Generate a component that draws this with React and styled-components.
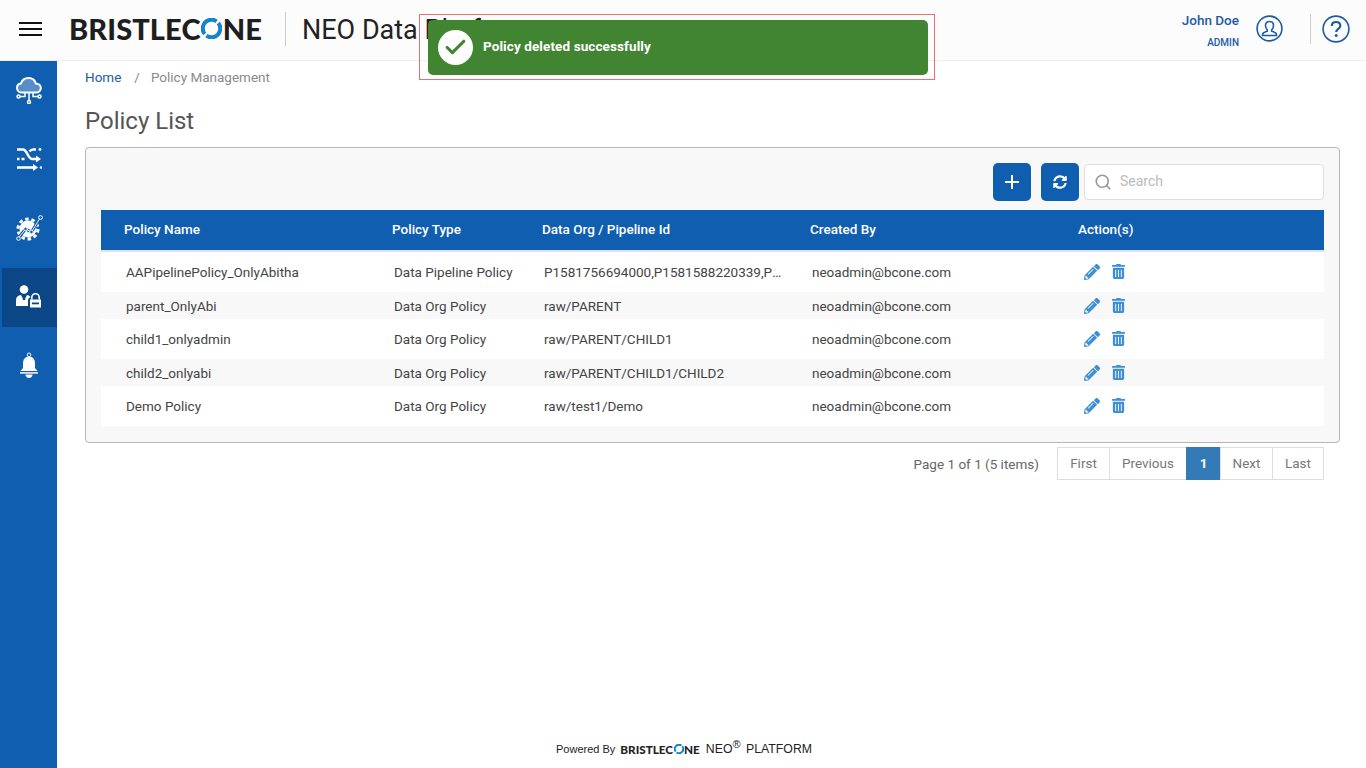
import React from "react";
import styled, { createGlobalStyle } from "styled-components";
import { FaTrashAlt, FaSyncAlt, FaPencilAlt } from "react-icons/fa";
import { Check, Search } from "lucide-react";

const GlobalStyle = createGlobalStyle`
  html, body { margin: 0; padding: 0; height: 100%; background: #fff; }
  body { font-family: Roboto, "Liberation Sans", sans-serif; font-size: 13.5px; color: #444; }
  #root { height: 100%; }
`;

const Page = styled.div`
  width: 1366px;
  height: 768px;
  overflow: hidden;
  position: relative;
  display: flex;
  flex-direction: column;
`;

const Header = styled.header`
  height: 60px;
  flex: none;
  background: #fcfcfc;
  border-bottom: 1px solid #eee;
  display: flex;
  align-items: center;
`;

const Burger = styled.div`
  width: 23px;
  margin-left: 19px;
  display: flex;
  flex-direction: column;
  gap: 4px;
  margin-top: -2px;
  span { height: 2px; background: #111; display: block; }
`;

const LogoText = styled.div`
  margin-left: 27px;
  margin-top: -3px;
  font-family: Lato, sans-serif;
  font-weight: 900;
  font-size: 29px;
  letter-spacing: 0.1px;
  color: #1e1e1e;
  display: flex;
  align-items: center;
  width: 193px;
  line-height: 1;
`;

const AppTitle = styled.div`
  margin-left: 23px;
  padding-left: 16px;
  height: 34px;
  margin-top: -3px;
  border-left: 1px solid #ccc;
  font-size: 27px;
  line-height: 36px;
  color: #222;
  white-space: nowrap;
`;

const HeaderRight = styled.div`
  margin-left: auto;
  display: flex;
  align-items: center;
  padding-right: 16px;
  margin-top: -3px;
`;

const UserBox = styled.div`
  text-align: right;
  color: #1d5ba6;
  margin-right: 17px;
  padding-top: 2px;
`;

const UserName = styled.div`
  font-size: 13.5px;
  font-weight: 500;
  line-height: 18px;
`;

const UserRole = styled.div`
  font-size: 10px;
  font-weight: 500;
  line-height: 12px;
  margin-top: 8px;
`;

const HeaderDivider = styled.div`
  width: 1px;
  height: 30px;
  background: #ccc;
  margin: 0 11px 0 27px;
`;

const Body = styled.div`
  flex: 1;
  display: flex;
  min-height: 0;
`;

const Sidebar = styled.nav`
  width: 57px;
  flex: none;
  background: #105eb0;
  display: flex;
  flex-direction: column;
`;

const SideItem = styled.div`
  height: 59px;
  margin-left: 2px;
  margin-top: 10px;
  background: ${(p) => (p.$active ? "#0b4787" : "transparent")};
  display: flex;
  align-items: center;
  justify-content: center;
  padding-right: 1px;
  padding-bottom: 1px;
  box-sizing: border-box;
  &:first-child { margin-top: 0; }
`;

const Main = styled.main`
  flex: 1;
  padding: 0 26px 0 28px;
  display: flex;
  flex-direction: column;
  min-width: 0;
`;

const Breadcrumb = styled.div`
  height: 32px;
  display: flex;
  align-items: center;
  color: #8a8a8a;
  a { color: #1d5ba6; text-decoration: none; }
  i { font-style: normal; margin: 0 11px 0 13px; }
`;

const Title = styled.h1`
  margin: 12px 0 9px;
  font-size: 24px;
  font-weight: 400;
  line-height: 33px;
  color: #555;
`;

const Panel = styled.section`
  border: 1px solid #b5b5b5;
  border-radius: 4px;
  background: #f8f8f8;
  padding: 15px 15px 16px;
`;

const Toolbar = styled.div`
  display: flex;
  justify-content: flex-end;
  align-items: center;
  height: 38px;
  margin-bottom: 9px;
`;

const IconButton = styled.button`
  width: 38px;
  height: 38px;
  border: none;
  border-radius: 5px;
  background: #105eb0;
  color: #fff;
  padding: 0;
  margin-right: ${(p) => p.$mr}px;
  display: flex;
  align-items: center;
  justify-content: center;
`;

const SearchBox = styled.div`
  width: 240px;
  height: 36px;
  box-sizing: border-box;
  background: #fff;
  border: 1px solid #ddd;
  border-radius: 4px;
  display: flex;
  align-items: center;
  padding-left: 9px;
  color: #999;
  gap: 8px;
`;

const SearchInput = styled.input`
  border: none;
  outline: none;
  background: transparent;
  font: 14px Roboto, sans-serif;
  width: 180px;
  padding: 0 0 2px;
  &::placeholder { color: #bbb; }
`;

const Table = styled.div`
  display: flex;
  flex-direction: column;
`;

const columns = "268px 150px 268px 268px 1fr";

const HeadRow = styled.div`
  display: grid;
  grid-template-columns: ${columns};
  height: 42px;
  box-sizing: border-box;
  background: #105eb0;
  color: #fff;
  font-weight: 500;
  align-items: center;
  padding: 0 0 2px 23px;
  border-bottom: 2px solid #e2e2e2;
`;

const Row = styled.div`
  display: grid;
  grid-template-columns: ${columns};
  height: ${(p) => p.$h}px;
  box-sizing: border-box;
  background: ${(p) => (p.$shade ? "#f8f8f8" : "#fff")};
  align-items: center;
  padding: 0 0 ${(p) => (p.$shade ? 0 : 1)}px 25px;
  color: #444;
`;

const Cell = styled.div`
  white-space: nowrap;
  overflow: hidden;
  text-overflow: ellipsis;
  padding-right: 30px;
`;

const Actions = styled.div`
  display: flex;
  align-items: center;
  gap: 11px;
  padding-left: 6px;
  margin-left: -2px;
  color: #3b8fd6;
`;

const Pager = styled.div`
  display: flex;
  justify-content: flex-end;
  align-items: center;
  margin-top: 4px;
  margin-right: 16px;
`;

const PagerInfo = styled.span`
  color: #666;
  margin-right: 19px;
`;

const PagerList = styled.div`
  display: flex;
  height: 33px;
`;

const PageLink = styled.div`
  box-sizing: border-box;
  display: flex;
  align-items: center;
  justify-content: center;
  width: ${(p) => p.$w}px;
  border: 1px solid #ddd;
  margin-left: -1px;
  padding-bottom: 2px;
  font-weight: ${(p) => (p.$active ? 700 : 400)};
  background: ${(p) => (p.$active ? "#337ab7" : "#fff")};
  border-color: ${(p) => (p.$active ? "#337ab7" : "#ddd")};
  color: ${(p) => (p.$active ? "#fff" : "#777")};
`;

const Footer = styled.footer`
  margin-top: auto;
  height: 30px;
  display: flex;
  align-items: flex-start;
  padding-left: 471px;
  font-family: "Liberation Sans", sans-serif;
  color: #222;
  white-space: nowrap;
`;

const Powered = styled.span`
  font-size: 11px;
  line-height: 14px;
  margin-top: 4px;
`;

const FooterLogo = styled.span`
  font-family: Lato, sans-serif;
  font-weight: 900;
  font-size: 11.7px;
  line-height: 14px;
  margin: 4px 6px 0 5px;
  color: #222;
  display: inline-flex;
  align-items: center;
`;

const Platform = styled.span`
  font-size: 12.3px;
  line-height: 14px;
  margin-top: 4px;
  word-spacing: 2px;
  sup { font-size: 11px; line-height: 0; }
`;

const Toast = styled.div`
  position: absolute;
  left: 419px;
  top: 14px;
  width: 516px;
  height: 66px;
  box-sizing: border-box;
  border: 1px solid #ee6f6f;
  padding: 5px 6px 4px 8px;
`;

const ToastBody = styled.div`
  height: 100%;
  background: #418532;
  border-radius: 5px;
  display: flex;
  align-items: center;
  padding-left: 10px;
  gap: 10px;
  color: #fff;
  font-weight: 700;
`;

const ToastLabel = styled.span`
  margin-top: -3px;
  letter-spacing: 0.1px;
`;

const ToastIcon = styled.div`
  width: 35px;
  height: 35px;
  border-radius: 50%;
  background: #fff;
  color: #418532;
  display: flex;
  align-items: center;
  justify-content: center;
`;

const LogoO = ({ size }) => (
  <svg width={size} height={size} viewBox="0 0 24 24" style={{ margin: "0 0.5px" }}>
    <g fill="none" stroke="#1683cc" strokeWidth="4.6">
      <path d="M17.800 3.800A10 10 0 0 0 4.200 18.200" />
      <path d="M6.200 20.200A10 10 0 0 0 19.800 5.800" />
    </g>
  </svg>
);

const CloudIcon = () => (
  <svg width="28" height="28" viewBox="0 0 28 28" fill="none" stroke="#fff" strokeWidth="1.500">
    <path d="M7 16.500c-3 0-5-2-5-4.600 0-2.400 1.800-4.200 4-4.400C7 4 10 2 13.500 2c3.700 0 6.500 2.300 7.300 5.500 2.800 0 5 2 5 4.500 0 2.600-2 4.500-5 4.500z" fill="#dfe9f5" fillOpacity="0.35" strokeWidth="2" />
    <path d="M10 17v3.500H5M14 17v8M18 17v3.500h5" />
    <circle cx="3.500" cy="20.500" r="1.500" />
    <circle cx="14" cy="26" r="1.500" />
    <circle cx="24.500" cy="20.500" r="1.500" />
  </svg>
);

const ShuffleIcon = () => (
  <svg width="25" height="23" viewBox="0 0 25 23" fill="none" stroke="#fff" strokeWidth="2.600">
    <path d="M0 1.500h6c4 0 5 9.500 9 9.500h5" />
    <path d="M19 7.500l5 3.500-5 3.500z" fill="#fff" stroke="none" />
    <path d="M12.500 3.500c1-1.300 2-2 3.500-2h3" />
    <path d="M0 19.500h17" />
    <path d="M16 16l5 3.500-5 3.500z" fill="#fff" stroke="none" />
    <path d="M0 11h2.500M4.500 11h3" />
    <circle cx="23" cy="1.500" r="1.400" fill="#fff" stroke="none" />
    <circle cx="24" cy="19.500" r="1.300" fill="#fff" stroke="none" />
  </svg>
);

const GearIcon = () => (
  <svg width="27" height="28" viewBox="0 0 27 28">
    <circle cx="12" cy="15" r="8.500" fill="#fff" />
    <circle cx="12" cy="15" r="10" fill="none" stroke="#fff" strokeWidth="3" strokeDasharray="3.500 2.780" />
    <path d="M2.500 24l7-9 6 3L24 4" fill="none" stroke="#105eb0" strokeWidth="3" />
    <path d="M2.500 24l7-9 6 3L24 4" fill="none" stroke="#fff" strokeWidth="0.900" />
    <circle cx="2.500" cy="24.500" r="1.800" fill="#105eb0" stroke="#fff" />
    <circle cx="9.500" cy="15" r="1.800" fill="#105eb0" stroke="#fff" />
    <circle cx="15.500" cy="18" r="1.800" fill="#105eb0" stroke="#fff" />
    <circle cx="24.500" cy="3.500" r="1.900" fill="#105eb0" stroke="#fff" />
  </svg>
);

const UserLockIcon = () => (
  <svg width="28" height="26" viewBox="0 0 28 26" fill="#fff">
    <circle cx="9" cy="5.500" r="4.300" />
    <path d="M1 22v-6c0-3 2-4.500 5-5l2 4-.5 1h3l-.5-1 2-4c1.500.3 2.800 1 3.500 2-1.500.8-2.500 2.200-2.500 4v5z" />
    <path d="M16 15.500v-2a4.500 4.500 0 0 1 9 0v2h-1.600v-2a2.900 2.900 0 0 0-5.800 0v2z" />
    <path d="M15 15.500h11V23.500H15z" />
    <path d="M17 18.500h7v1.800h-7z" fill="#0b4787" />
  </svg>
);

const BellIcon = () => (
  <svg width="20" height="28" viewBox="0 0 20 28" fill="#fff">
    <circle cx="10" cy="2.800" r="1.800" fill="none" stroke="#fff" strokeWidth="1" />
    <path d="M10 4.500c-4 0-6 3-6 7v4.500L1.500 19h17L16 16v-4.500c0-4-2-7-6-7z" />
    <path d="M1 20h18v1.800H1z" fill="#d7e3f1" />
    <path d="M6.500 22.500h7c0 2-1.500 3.500-3.500 3.500s-3.500-1.500-3.500-3.500z" />
  </svg>
);

const ProfileIcon = () => (
  <svg width="27" height="27" viewBox="0 0 27 27" fill="none" stroke="#1d5ba6" strokeWidth="1.600">
    <circle cx="13.500" cy="13.500" r="12.400" />
    <path d="M13.500 6.500c-2.600 0-4 1.800-4 4.200 0 1.800.7 3.200 1.800 4.100v1.400c-2 .7-4.800 1.500-4.800 3.500v.8h14v-.8c0-2-2.800-2.800-4.800-3.500v-1.400c1.100-.9 1.800-2.300 1.800-4.100 0-2.400-1.400-4.200-4-4.200z" />
  </svg>
);

const HelpIcon = () => (
  <svg width="28" height="28" viewBox="0 0 28 28" fill="none" stroke="#1d5ba6">
    <circle cx="14" cy="14" r="12.900" strokeWidth="1.600" />
    <path d="M9.800 11c0-2.500 1.800-4 4.300-4s4.200 1.500 4.200 3.700c0 3.200-4.100 3.300-4.100 6.300" strokeWidth="2.200" />
    <circle cx="14.200" cy="20.500" r="1.500" fill="#1d5ba6" stroke="none" />
  </svg>
);

const PlusIcon = () => (
  <svg width="16" height="16" viewBox="0 0 16 16" stroke="#fff" strokeWidth="2">
    <path d="M8 1v14M1 8h14" />
  </svg>
);

const policies = [
  { name: "AAPipelinePolicy_OnlyAbitha", type: "Data Pipeline Policy", org: "P1581756694000,P1581588220339,P1581588220339", h: 40 },
  { name: "parent_OnlyAbi", type: "Data Org Policy", org: "raw/PARENT", h: 27, shade: true },
  { name: "child1_onlyadmin", type: "Data Org Policy", org: "raw/PARENT/CHILD1", h: 40 },
  { name: "child2_onlyabi", type: "Data Org Policy", org: "raw/PARENT/CHILD1/CHILD2", h: 27, shade: true },
  { name: "Demo Policy", type: "Data Org Policy", org: "raw/test1/Demo", h: 40 },
];

export default function App() {
  return (
    <Page>
      <GlobalStyle />
      <Header>
        <Burger><span /><span /><span /></Burger>
        <LogoText>BRISTLEC<LogoO size={21} />NE</LogoText>
        <AppTitle>NEO Data Platform</AppTitle>
        <HeaderRight>
          <UserBox>
            <UserName>John Doe</UserName>
            <UserRole>ADMIN</UserRole>
          </UserBox>
          <ProfileIcon />
          <HeaderDivider />
          <HelpIcon />
        </HeaderRight>
      </Header>
      <Body>
        <Sidebar>
          <SideItem><CloudIcon /></SideItem>
          <SideItem><ShuffleIcon /></SideItem>
          <SideItem><GearIcon /></SideItem>
          <SideItem $active><UserLockIcon /></SideItem>
          <SideItem><BellIcon /></SideItem>
        </Sidebar>
        <Main>
          <Breadcrumb>
            <a href="#home">Home</a>
            <i>/</i>
            <span>Policy Management</span>
          </Breadcrumb>
          <Title>Policy List</Title>
          <Panel>
            <Toolbar>
              <IconButton $mr={10}><PlusIcon /></IconButton>
              <IconButton $mr={5}><FaSyncAlt size={14} /></IconButton>
              <SearchBox>
                <Search size={18} strokeWidth={2.2} />
                <SearchInput placeholder="Search" />
              </SearchBox>
            </Toolbar>
            <Table>
              <HeadRow>
                <div>Policy Name</div>
                <div>Policy Type</div>
                <div>Data Org / Pipeline Id</div>
                <div>Created By</div>
                <div>Action(s)</div>
              </HeadRow>
              {policies.map((p) => (
                <Row key={p.name} $h={p.h} $shade={p.shade}>
                  <Cell>{p.name}</Cell>
                  <Cell>{p.type}</Cell>
                  <Cell>{p.org}</Cell>
                  <Cell>neoadmin@bcone.com</Cell>
                  <Actions>
                    <FaPencilAlt size={16} />
                    <FaTrashAlt size={15} />
                  </Actions>
                </Row>
              ))}
            </Table>
          </Panel>
          <Pager>
            <PagerInfo>Page 1 of 1 (5 items)</PagerInfo>
            <PagerList>
              <PageLink $w={53}>First</PageLink>
              <PageLink $w={78}>Previous</PageLink>
              <PageLink $w={35} $active>1</PageLink>
              <PageLink $w={53}>Next</PageLink>
              <PageLink $w={52}>Last</PageLink>
            </PagerList>
          </Pager>
          <Footer>
            <Powered>Powered By</Powered>
            <FooterLogo>BRISTLEC<LogoO size={10} />NE</FooterLogo>
            <Platform>NEO<sup>®</sup> PLATFORM</Platform>
          </Footer>
        </Main>
      </Body>
      <Toast>
        <ToastBody>
          <ToastIcon><Check size={25} strokeWidth={3} /></ToastIcon>
          <ToastLabel>Policy deleted successfully</ToastLabel>
        </ToastBody>
      </Toast>
    </Page>
  );
}
